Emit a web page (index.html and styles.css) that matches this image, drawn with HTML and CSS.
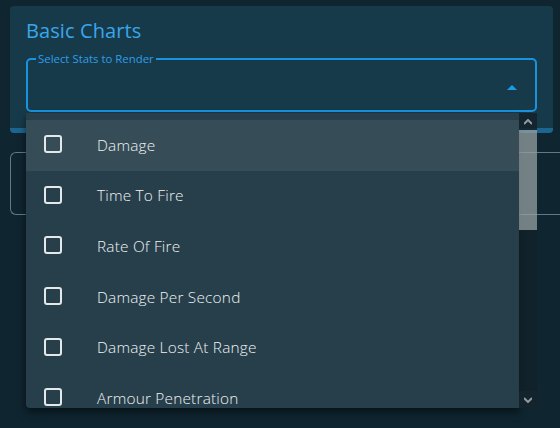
FILE: index.html
```html
<!DOCTYPE html>
<html lang="en">

<head>
  <meta charset="UTF-8" />
  <meta name="viewport" content="width=device-width, initial-scale=1.0">
  <title>Basic Charts</title>
  <link rel="stylesheet" href="styles.css">
</head>

<body>
  <section class="card">
    <h2 class="card-title">Basic Charts</h2>
    <fieldset class="select-field">
      <legend>Select Stats to Render</legend>
      <span class="select-arrow"></span>
    </fieldset>
  </section>
  <div class="outlined-box"></div>

  <div class="menu">
    <ul class="menu-list">
      <li class="menu-item active"><span class="check"></span>Damage</li>
      <li class="menu-item"><span class="check"></span>Time To Fire</li>
      <li class="menu-item"><span class="check"></span>Rate Of Fire</li>
      <li class="menu-item"><span class="check"></span>Damage Per Second</li>
      <li class="menu-item"><span class="check"></span>Damage Lost At Range</li>
      <li class="menu-item"><span class="check"></span>Armour Penetration</li>
    </ul>
  </div>
  <div class="scrollbar">
    <div class="scroll-btn">
      <svg width="8" height="6" viewBox="0 0 8 6"><path d="M0 5 L4 1 L8 5" fill="none" stroke="#8d9ca2" stroke-width="2"/></svg>
    </div>
    <div class="scroll-thumb"></div>
    <div class="scroll-track"></div>
    <div class="scroll-btn">
      <svg width="8" height="6" viewBox="0 0 8 6"><path d="M0 1 L4 5 L8 1" fill="none" stroke="#8d9ca2" stroke-width="2"/></svg>
    </div>
  </div>
</body>

</html>
```

FILE: styles.css
```css
:root {
  --bg-page: #0f2530;
  --bg-card: #173a4b;
  --bg-menu: #273f4b;
  --bg-hover: #364c56;
  --accent: #1a93de;
  --text-light: #eef2f3;
}

* {
  margin: 0;
  padding: 0;
  box-sizing: border-box;
}

body {
  width: 560px;
  height: 428px;
  overflow: hidden;
  background: var(--bg-page);
  font-family: 'Open Sans', 'Liberation Sans', sans-serif;
  font-weight: 300;
  color: var(--text-light);
  position: relative;
}

.card {
  margin: 6px 7px 0 10px;
  height: 127px;
  background: var(--bg-card);
  border-bottom: 5px solid #1d6591;
  border-radius: 4px;
  padding: 13px 16px 0;
}

.card-title {
  font-size: 20px;
  font-weight: 400;
  color: #3aa6ea;
  line-height: 24px;
  letter-spacing: 0.1px;
}

.select-field {
  position: relative;
  margin-top: 10px;
  height: 59px;
  width: 511px;
  border: 2px solid var(--accent);
  border-radius: 5px;
  padding: 0 8px;
}

.select-field legend {
  font-size: 11.4px;
  font-weight: 400;
  color: #2d9ee6;
  padding: 0 2px;
  line-height: 12px;
}

.select-arrow {
  position: absolute;
  right: 18px;
  top: 20px;
  width: 0;
  height: 0;
  border-left: 5px solid transparent;
  border-right: 5px solid transparent;
  border-bottom: 5px solid #1c9ce8;
}

.outlined-box {
  margin: 19px 0 0 10px;
  height: 63px;
  width: 560px;
  border: 1px solid #5e7b87;
  border-right: none;
  border-radius: 6px 0 0 6px;
}

.menu {
  position: absolute;
  left: 26px;
  top: 113px;
  width: 493px;
  height: 295px;
  overflow: hidden;
  background: var(--bg-menu);
  border-radius: 0 0 0 4px;
  box-shadow: 0 5px 10px rgba(0, 0, 0, 0.35), 0 2px 4px rgba(0, 0, 0, 0.25);
}

.menu-list {
  list-style: none;
  padding-top: 7px;
}

.menu-item {
  display: flex;
  align-items: center;
  height: 50.6px;
  padding-left: 18px;
  font-size: 15.4px;
  letter-spacing: 0.2px;
}

.menu-item.active {
  background: var(--bg-hover);
}

.check {
  width: 18px;
  height: 18px;
  border: 2px solid #e4e8ea;
  border-radius: 3px;
  margin-right: 35px;
  margin-top: -2px;
}

.scrollbar {
  position: absolute;
  left: 519px;
  top: 113px;
  width: 18px;
  height: 295px;
  display: flex;
  flex-direction: column;
}

.scroll-btn {
  height: 17px;
  display: flex;
  align-items: center;
  justify-content: center;
  background: rgba(22, 36, 44, 0.92);
}

.scroll-thumb {
  height: 100px;
  background: rgba(150, 160, 162, 0.75);
}

.scroll-track {
  flex: 1;
  background: rgba(20, 32, 38, 0.55);
}
```
